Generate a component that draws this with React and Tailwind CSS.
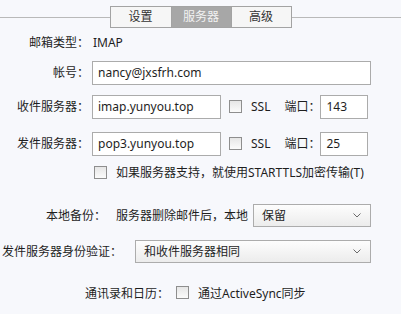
import { useState } from 'react'

function Checkbox({ checked, onChange }) {
  return (
    <span
      onClick={onChange}
      className="inline-block w-[13px] h-[13px] border border-[#8e8e8e] bg-gradient-to-b from-[#e6e6e6] to-[#fbfbfb] shrink-0 cursor-default"
    >
      {checked && (
        <svg viewBox="0 0 11 11" className="w-full h-full">
          <path d="M2 5.5l2.5 2.5L9 3" fill="none" stroke="#333" strokeWidth="1.4" />
        </svg>
      )}
    </span>
  )
}

function Chevron() {
  return (
    <svg viewBox="0 0 8 5" className="w-[8px] h-[5px]">
      <path d="M0.5 0.5L4 4L7.5 0.5" fill="none" stroke="#6b6b6b" strokeWidth="1" />
    </svg>
  )
}

function Select({ value, className }) {
  return (
    <div className={`h-[23px] flex items-center justify-between pl-[8px] pr-[9px] border border-[#acacac] bg-gradient-to-b from-[#fdfdfd] to-[#ececec] ${className}`}>
      <span>{value}</span>
      <Chevron />
    </div>
  )
}

function Field({ value, className }) {
  return (
    <div className={`h-[24px] flex items-center pl-[5px] border border-[#ababab] bg-white ${className}`}>
      {value}
    </div>
  )
}

export default function App() {
  const [tab, setTab] = useState(1)
  const [ssl1, setSsl1] = useState(false)
  const [ssl2, setSsl2] = useState(false)
  const [tls, setTls] = useState(false)
  const [sync, setSync] = useState(false)
  const tabs = ['设置', '服务器', '高级']

  return (
    <div className="w-[401px] h-[314px] overflow-hidden bg-[#f7f8fc] text-[12px] leading-none text-[#1e1e1e] font-['Noto_Sans','Noto_Sans_CJK_SC',sans-serif]">
      {/* tab strip */}
      <div className="pt-[6px] flex items-center">
        <div className="flex-1 h-px bg-[#b9b9b9]" />
        <div className="flex border border-[#a3a3a3]">
          {tabs.map((t, i) => (
            <div
              key={t}
              onClick={() => setTab(i)}
              className={`w-[60px] h-[20px] flex items-center justify-center ${i > 0 ? 'border-l border-[#a3a3a3]' : ''} ${tab === i ? 'bg-[#a7a7a7] text-[#f2f2f2]' : 'bg-[#f6f6f6] text-[#333]'}`}
            >
              {t}
            </div>
          ))}
        </div>
        <div className="flex-1 h-px bg-[#b9b9b9]" />
      </div>

      {/* mailbox type */}
      <div className="mt-[5px] h-[20px] flex items-center">
        <span className="w-[89px] text-right">邮箱类型：</span>
        <span className="ml-[4px]">IMAP</span>
      </div>

      {/* account */}
      <div className="mt-[8px] flex items-center">
        <span className="w-[89px] text-right">帐号：</span>
        <Field value="nancy@jxsfrh.com" className="ml-[3px] w-[279px]" />
      </div>

      {/* incoming */}
      <div className="mt-[10px] flex items-center">
        <span className="w-[89px] text-right">收件服务器：</span>
        <Field value="imap.yunyou.top" className="ml-[3px] w-[129px]" />
        <span className="ml-[8px]"><Checkbox checked={ssl1} onChange={() => setSsl1(!ssl1)} /></span>
        <span className="ml-[9px]">SSL</span>
        <span className="ml-[14px]">端口：</span>
        <Field value="143" className="ml-[0px] w-[48px]" />
      </div>

      {/* outgoing */}
      <div className="mt-[13px] flex items-center">
        <span className="w-[89px] text-right">发件服务器：</span>
        <Field value="pop3.yunyou.top" className="ml-[3px] w-[129px]" />
        <span className="ml-[8px]"><Checkbox checked={ssl2} onChange={() => setSsl2(!ssl2)} /></span>
        <span className="ml-[9px]">SSL</span>
        <span className="ml-[14px]">端口：</span>
        <Field value="25" className="ml-[0px] w-[48px]" />
      </div>

      {/* starttls */}
      <div className="mt-[10px] pl-[94px] flex items-center">
        <Checkbox checked={tls} onChange={() => setTls(!tls)} />
        <span className="ml-[9px]">如果服务器支持，就使用STARTTLS加密传输(T)</span>
      </div>

      {/* local backup */}
      <div className="mt-[25px] pl-[46px] flex items-center">
        <span>本地备份：</span>
        <span className="ml-[10px]">服务器删除邮件后，本地</span>
        <Select value="保留" className="ml-[5px] w-[118px]" />
      </div>

      {/* auth */}
      <div className="mt-[13px] pl-[2px] flex items-center">
        <span>发件服务器身份验证：</span>
        <Select value="和收件服务器相同" className="ml-[13px] w-[236px]" />
      </div>

      {/* sync */}
      <div className="mt-[23px] pl-[85px] flex items-center">
        <span>通讯录和日历：</span>
        <span className="ml-[7px]"><Checkbox checked={sync} onChange={() => setSync(!sync)} /></span>
        <span className="ml-[9px]">通过ActiveSync同步</span>
      </div>
    </div>
  )
}
